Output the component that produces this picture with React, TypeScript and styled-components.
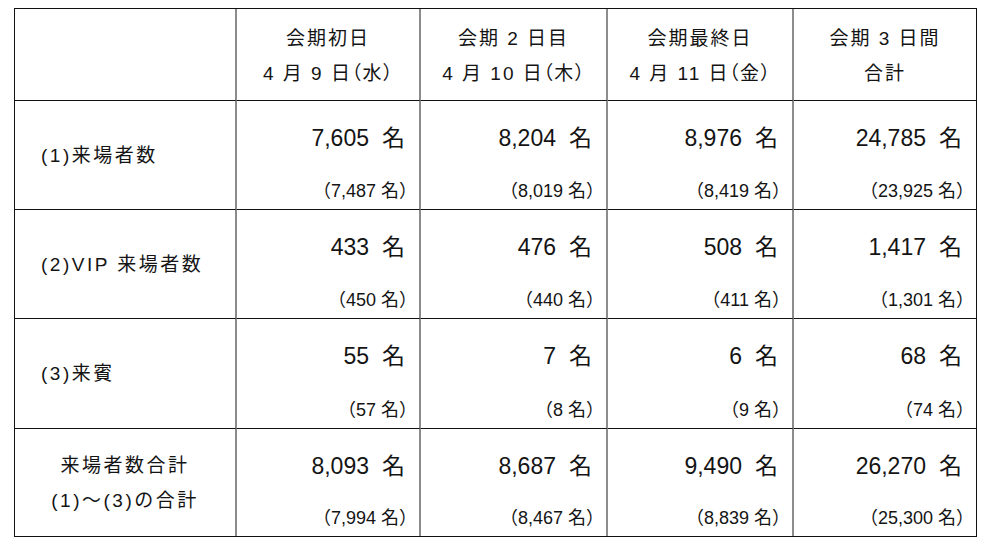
import React from "react";
import styled, { createGlobalStyle } from "styled-components";

const GlobalStyle = createGlobalStyle`
  html, body {
    margin: 0;
    padding: 0;
    background: #fff;
  }
  body {
    font-family: "Liberation Sans", "Noto Sans CJK JP", sans-serif;
    color: #141414;
  }
`;

const Page = styled.div`
  width: 994px;
  height: 546px;
  padding: 8px 0 0 14px;
  box-sizing: border-box;
  background: #fff;
`;

const Grid = styled.div`
  display: grid;
  grid-template-columns: 222px 184px 187px 186px 182px;
  grid-template-rows: 92px 109px 109px 110px 107px;
  width: max-content;
  border: 1px solid #111;
`;

const Cell = styled.div`
  background: #fff;
  box-sizing: border-box;
  border-right: 2px solid #8c8c8c;
  border-bottom: 1px solid #111;

  &:nth-child(5n) {
    border-right: none;
  }
  &:nth-last-child(-n + 5) {
    border-bottom: none;
  }
`;

const HeadCell = styled(Cell)`
  display: flex;
  flex-direction: column;
  align-items: center;
  justify-content: center;
  font-size: 19px;
  line-height: 35px;
  letter-spacing: 2px;
  padding-top: 2px;
`;

const Paren = styled.span`
  font-feature-settings: "halt";
  letter-spacing: 1px;
`;

const LabelCell = styled(Cell)<{ $center?: boolean }>`
  display: flex;
  flex-direction: column;
  justify-content: center;
  align-items: ${({ $center }) => ($center ? "center" : "flex-start")};
  padding-left: ${({ $center }) => ($center ? "0" : "26px")};
  font-size: 19px;
  line-height: 35px;
  letter-spacing: 2.5px;
`;

const ValueCell = styled(Cell)`
  display: flex;
  flex-direction: column;
  align-items: flex-end;
  justify-content: space-between;
  padding: 22px 2px 7px 0;
`;

const Big = styled.div`
  font-size: 23px;
  line-height: 30px;
  margin-right: 12px;
  white-space: nowrap;
`;

const Unit = styled.span`
  margin-left: 13px;
`;

const Small = styled.div`
  font-size: 18px;
  line-height: 22px;
  white-space: nowrap;
`;

type Row = {
  label: string[];
  center?: boolean;
  values: [string, string][];
};

type Head = { title: string; date: string; day?: string };

const heads: Head[] = [
  { title: "会期初日", date: "4 月 9 日", day: "水" },
  { title: "会期 2 日目", date: "4 月 10 日", day: "木" },
  { title: "会期最終日", date: "4 月 11 日", day: "金" },
  { title: "会期 3 日間", date: "合計" },
];

const rows: Row[] = [
  {
    label: ["(1)来場者数"],
    values: [
      ["7,605", "7,487"],
      ["8,204", "8,019"],
      ["8,976", "8,419"],
      ["24,785", "23,925"],
    ],
  },
  {
    label: ["(2)VIP 来場者数"],
    values: [
      ["433", "450"],
      ["476", "440"],
      ["508", "411"],
      ["1,417", "1,301"],
    ],
  },
  {
    label: ["(3)来賓"],
    values: [
      ["55", "57"],
      ["7", "8"],
      ["6", "9"],
      ["68", "74"],
    ],
  },
  {
    label: ["来場者数合計", "(1)～(3)の合計"],
    center: true,
    values: [
      ["8,093", "7,994"],
      ["8,687", "8,467"],
      ["9,490", "8,839"],
      ["26,270", "25,300"],
    ],
  },
];

export default function App() {
  return (
    <Page>
      <GlobalStyle />
      <Grid>
        <HeadCell />
        {heads.map((h, i) => (
          <HeadCell key={i}>
            <div>{h.title}</div>
            <div>
              {h.date}
              {h.day && <Paren>（{h.day}）</Paren>}
            </div>
          </HeadCell>
        ))}
        {rows.map((row, i) => (
          <React.Fragment key={i}>
            <LabelCell $center={row.center}>
              {row.label.map((line, j) => (
                <div key={j}>{line}</div>
              ))}
            </LabelCell>
            {row.values.map(([cur, prev], j) => (
              <ValueCell key={j}>
                <Big>
                  {cur}
                  <Unit>名</Unit>
                </Big>
                <Small>（{prev} 名）</Small>
              </ValueCell>
            ))}
          </React.Fragment>
        ))}
      </Grid>
    </Page>
  );
}
